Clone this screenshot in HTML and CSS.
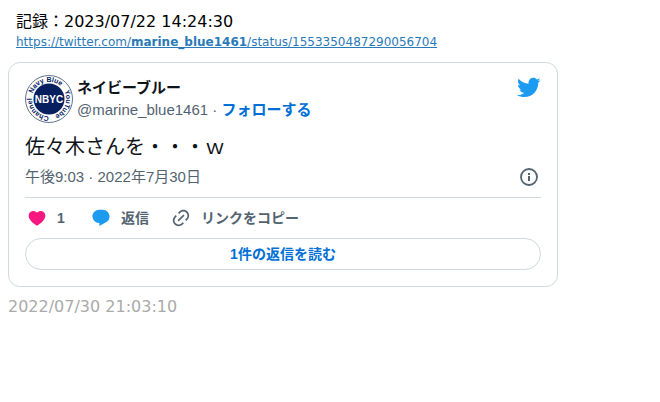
FILE: index.html
```html
<!DOCTYPE html>
<html lang="ja">
<head>
  <meta charset="UTF-8">
  <title>ツイート記録</title>
  <link rel="stylesheet" href="styles.css">
</head>
<body>
  <header class="record">
    <div class="record-date">記録：2023/07/22 14:24:30</div>
    <a class="record-link" href="https://twitter.com/marine_blue1461/status/1553350487290056704">https://twitter.com/<b>marine_blue1461</b>/status/1553350487290056704</a>
  </header>

  <article class="tweet">
    <div class="tweet-header">
      <svg class="avatar" viewBox="0 0 48 48" aria-label="NBYC">
        <defs>
          <path id="ringText" d="M7.400 19.500A17.200 17.200 0 0 1 41.200 24A17.200 17.200 0 0 1 6.800 24A17.200 17.200 0 0 1 7.400 19.500"/>
        </defs>
        <circle cx="24" cy="24" r="23.500" fill="#fff" stroke="#5f7392"/>
        <circle cx="24" cy="24" r="15.500" fill="#06205f"/>
        <text class="avatar-ring">
          <textPath href="#ringText" startOffset="1">Navy Blue</textPath>
          <textPath href="#ringText" startOffset="41">YouTube</textPath>
          <textPath href="#ringText" startOffset="76">Channel</textPath>
        </text>
        <text class="avatar-name" x="24" y="28" text-anchor="middle">NBYC</text>
      </svg>
      <div class="author">
        <a class="author-name" href="https://twitter.com/marine_blue1461">ネイビーブルー</a>
        <div class="author-handle">@marine_blue1461 · <a class="follow" href="#">フォローする</a></div>
      </div>
      <a class="bird" href="https://twitter.com/" aria-label="Twitter">
        <svg viewBox="0 0 24 24"><path d="M23.643 4.937c-.835.37-1.732.62-2.675.733.962-.576 1.7-1.49 2.048-2.578-.9.534-1.897.922-2.958 1.13-.85-.904-2.06-1.47-3.4-1.47-2.572 0-4.658 2.086-4.658 4.66 0 .364.042.718.12 1.06-3.873-.195-7.304-2.05-9.602-4.868-.4.69-.63 1.49-.63 2.342 0 1.616.823 3.043 2.072 3.878-.764-.025-1.482-.234-2.11-.583v.06c0 2.257 1.605 4.14 3.737 4.568-.392.106-.803.162-1.227.162-.3 0-.593-.028-.877-.082.593 1.85 2.313 3.198 4.352 3.234-1.595 1.25-3.604 1.995-5.786 1.995-.376 0-.747-.022-1.112-.065 2.062 1.323 4.51 2.093 7.14 2.093 8.57 0 13.255-7.098 13.255-13.254 0-.2-.005-.402-.014-.602.91-.658 1.7-1.477 2.323-2.41z"/></svg>
      </a>
    </div>

    <p class="tweet-text">佐々木さんを・・・ｗ</p>

    <div class="tweet-meta">
      <a class="tweet-time" href="#">午後9:03 · 2022年7月30日</a>
      <a class="info" href="#" aria-label="情報">
        <svg viewBox="0 0 20 20">
          <circle cx="10" cy="10" r="8" fill="none" stroke="currentColor" stroke-width="1.800"/>
          <path d="M9 9h2v5H9zM9 6h2v2H9z"/>
        </svg>
      </a>
    </div>

    <div class="actions">
      <button class="action like" type="button">
        <svg viewBox="0 0 24 24"><path d="M20.884 13.19c-1.351 2.48-4.001 5.12-8.379 7.67l-.503.3-.504-.3c-4.379-2.55-7.029-5.19-8.382-7.67-1.36-2.5-1.41-4.86-.514-6.67.887-1.79 2.647-2.91 4.601-3.01 1.651-.09 3.368.56 4.798 2.01 1.429-1.45 3.146-2.1 4.796-2.01 1.954.1 3.714 1.22 4.601 3.01.896 1.81.846 4.17-.514 6.67z"/></svg>
        <span>1</span>
      </button>
      <button class="action reply" type="button">
        <svg viewBox="0 0 24 24"><path d="M1.751 10c0-4.42 3.584-8 8.005-8h4.366c4.49 0 8.129 3.64 8.129 8.13 0 2.96-1.607 5.68-4.196 7.11l-8.054 4.46v-3.69h-.067c-4.49.1-8.183-3.51-8.183-8.01z"/></svg>
        <span>返信</span>
      </button>
      <button class="action copy" type="button">
        <svg viewBox="0 0 24 24"><path d="M18.36 5.64c-1.95-1.96-5.11-1.96-7.07 0L9.88 7.05 8.46 5.64l1.42-1.42c2.73-2.73 7.16-2.73 9.9 0 2.73 2.74 2.73 7.17 0 9.9l-1.42 1.42-1.41-1.42 1.41-1.41c1.96-1.96 1.96-5.12 0-7.07zm-2.12 3.53l-7.07 7.07-1.41-1.41 7.07-7.07 1.41 1.41zm-12.02.71l1.42-1.42 1.41 1.42-1.41 1.41c-1.96 1.96-1.96 5.12 0 7.07 1.95 1.96 5.11 1.96 7.07 0l1.41-1.41 1.42 1.41-1.42 1.42c-2.73 2.73-7.16 2.73-9.9 0-2.73-2.74-2.73-7.17 0-9.9z"/></svg>
        <span>リンクをコピー</span>
      </button>
    </div>

    <button class="read-replies" type="button">1件の返信を読む</button>
  </article>

  <time class="posted" datetime="2022-07-30T21:03:10">2022/07/30 21:03:10</time>
</body>
</html>
```
FILE: styles.css
```css
body {
  margin: 8px;
  font-family: "DejaVu Sans", "Noto Sans CJK JP", sans-serif;
  font-size: 16px;
  line-height: 24px;
  color: #000;
  background: #fff;
}
a {
  color: inherit;
  text-decoration: none;
}
svg {
  display: block;
  fill: currentColor;
}
.record {
  padding: 2px 8px 12px;
}
.record-link {
  display: block;
  font-size: 12px;
  line-height: 16px;
  color: #2a7ab8;
  text-decoration: underline;
}
.tweet {
  max-width: 516px;
  padding: 12px 16px 16px;
  border: 1px solid #cfd9de;
  border-radius: 12px;
  font-family: "Liberation Sans", "Noto Sans CJK JP", sans-serif;
  color: #0f1419;
}
.tweet-header {
  display: flex;
  gap: 4px;
}
.avatar {
  width: 48px;
  height: 48px;
}
.avatar-ring {
  font-size: 7px;
  font-weight: bold;
  fill: #06205f;
}
.avatar-name {
  font-size: 10px;
  font-weight: bold;
  fill: #fff;
}
.author {
  flex: 1;
  padding-top: 2px;
  font-size: 15px;
  line-height: 22px;
}
.author-name {
  display: block;
  font-weight: bold;
}
.author-handle {
  color: #536471;
}
.follow {
  font-weight: bold;
  color: #006fd6;
}
.bird {
  color: #1d9bf0;
}
.bird svg {
  width: 25px;
  height: 25px;
}
.tweet-text {
  margin: 10px 0 5px;
  font-size: 20px;
  line-height: 28px;
}
.tweet-meta {
  display: flex;
  align-items: center;
  justify-content: space-between;
  padding: 0 2px 9px 0;
  border-bottom: 1px solid #cfd9de;
  font-size: 15px;
  line-height: 22px;
  color: #536471;
}
.info svg {
  width: 20px;
  height: 20px;
}
.actions {
  display: flex;
  gap: 22px;
  padding: 10px 2px;
}
.action {
  display: flex;
  align-items: center;
  gap: 10px;
  padding: 0;
  border: none;
  background: none;
  font-family: inherit;
  font-size: 14px;
  font-weight: bold;
  line-height: 20px;
  color: #536471;
  cursor: pointer;
}
.action svg {
  width: 20px;
  height: 20px;
}
.action span {
  min-width: 12px;
  text-align: left;
}
.like svg {
  color: #f91880;
}
.reply svg {
  color: #1d9bf0;
}
.read-replies {
  display: block;
  width: 100%;
  padding: 5px 16px;
  border: 1px solid #cfd9de;
  border-radius: 16px;
  background: #fff;
  font-family: inherit;
  font-size: 14px;
  font-weight: bold;
  line-height: 20px;
  color: #006fd6;
  cursor: pointer;
}
.read-replies:hover {
  background: #f2f8fd;
}
.posted {
  display: block;
  padding-top: 8px;
  color: #aaa;
}
```
